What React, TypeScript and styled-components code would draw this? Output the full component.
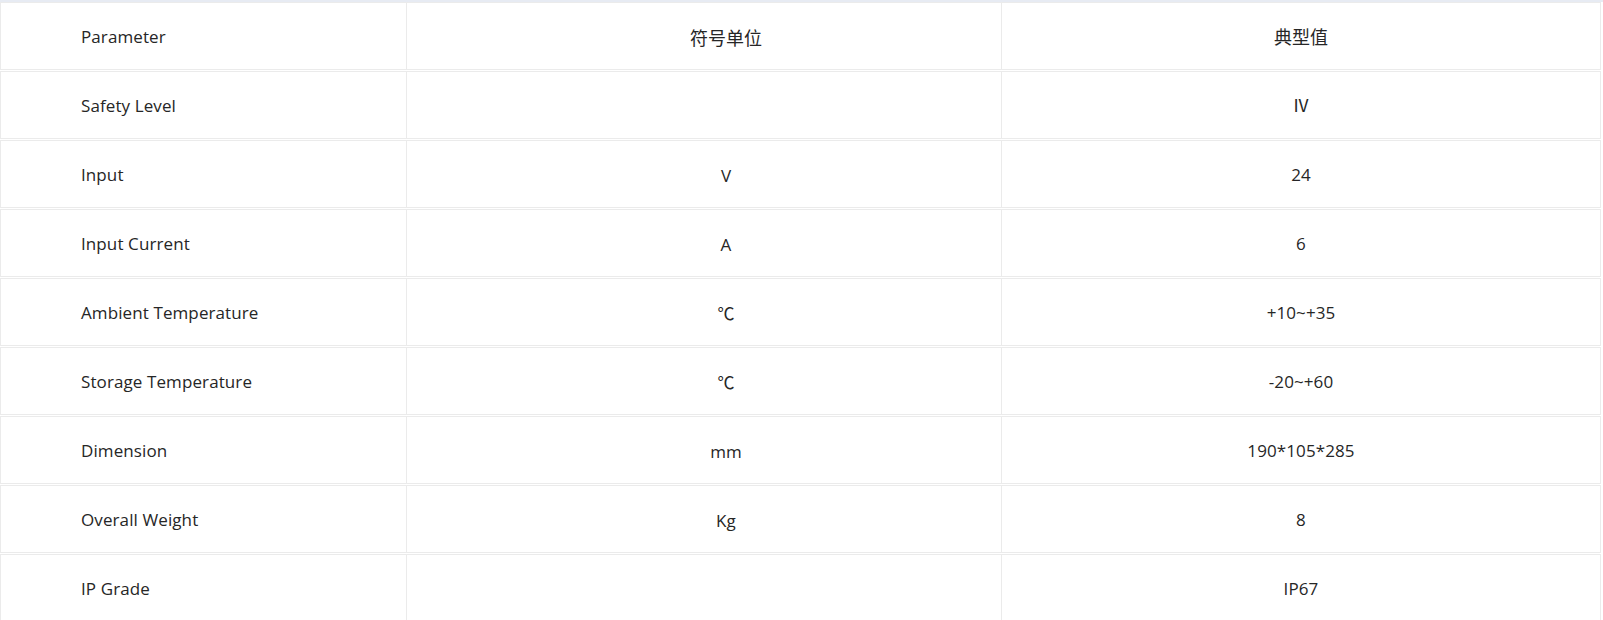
import React from 'react';
import styled, {createGlobalStyle} from 'styled-components';

const GlobalStyle = createGlobalStyle`
  html, body {
    margin: 0;
    padding: 0;
    background: #fff;
  }
  body {
    font-family: "Open Sans", "Noto Sans CJK SC", sans-serif;
    color: #262626;
  }
`;

// outer frame: light band on top, the table rows below
const Frame = styled.div`
  width: 1603px;
  border-top: 2px solid #e7ebf3;
  display: flex;
  flex-direction: column;
  gap: 1px;
`;

const Row = styled.div`
  display: grid;
  grid-template-columns: 407px 595px 599px;
  height: 68px;
`;

const Cell = styled.div<{ $align: 'left' | 'center'; $shift?: number; $cjk?: boolean }>`
  box-sizing: border-box;
  display: flex;
  align-items: center;
  justify-content: ${props => props.$align === 'left' ? 'flex-start' : 'center'};
  padding-left: ${props => props.$align === 'left' ? '80px' : `${props.$shift || 0}px`};
  padding-top: ${props => props.$shift ? 4 : 2}px;
  border-top: 1px solid #ebebeb;
  border-bottom: 1px solid #ebebeb;
  border-right: 1px solid #ebebeb;
  &:first-child {
    border-left: 1px solid #ebebeb;
  }
  font-size: ${props => props.$cjk ? 18 : 17}px;
  letter-spacing: ${props => props.$cjk ? 0 : 0.1}px;
  line-height: 20px;
  white-space: nowrap;
`;

const rows: [string, string, string][] = [
    ['Parameter', '符号单位', '典型值'],
    ['Safety Level', '', 'Ⅳ'],
    ['Input', 'V', '24'],
    ['Input Current', 'A', '6'],
    ['Ambient Temperature', '℃', '+10~+35'],
    ['Storage Temperature', '℃', '-20~+60'],
    ['Dimension', 'mm', '190*105*285'],
    ['Overall Weight', 'Kg', '8'],
    ['IP Grade', '', 'IP67'],
];

const App: React.FC = () => {
    return (
        <>
            <GlobalStyle/>
            <Frame>
                {rows.map(([name, unit, value], i) => (
                    <Row key={name}>
                        <Cell $align="left">{name}</Cell>
                        <Cell $align="center" $shift={44} $cjk={i === 0}>{unit}</Cell>
                        <Cell $align="center" $cjk={i === 0}>{value}</Cell>
                    </Row>
                ))}
            </Frame>
        </>
    );
};

export default App;
